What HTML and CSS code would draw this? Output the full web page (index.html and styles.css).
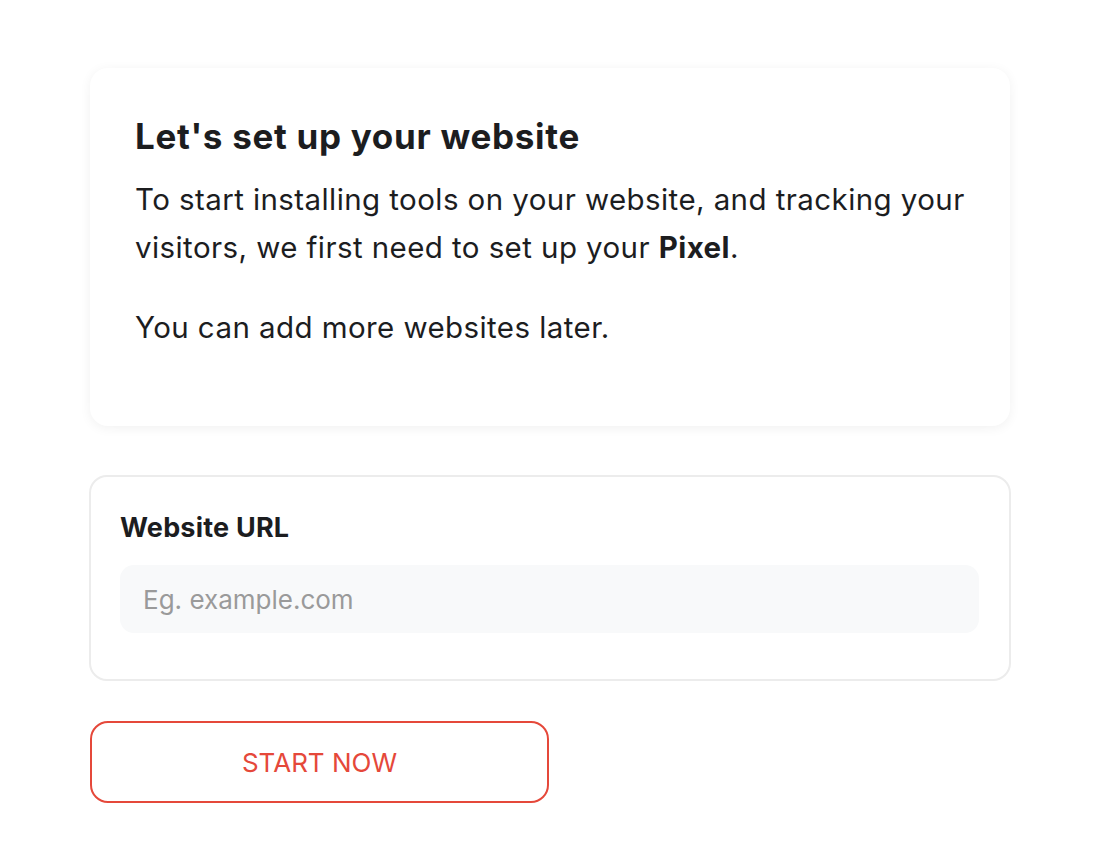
FILE: index.html
```html
<!DOCTYPE html>
<html lang="en">
<head>
    <meta charset="UTF-8" />
    <meta name="viewport" content="width=device-width, initial-scale=1" />
    <title>Set up your website</title>
    <link rel="stylesheet" href="styles.css">
</head>
<body>
    <div class="setup">
        <div class="intro-card">
            <h1>Let's set up your website</h1>
            <p>To start installing tools on your website, and tracking your visitors, we first need to set up your <strong>Pixel</strong>.</p>
            <p>You can add more websites later.</p>
        </div>
        <form class="url-card" onsubmit="return false;">
            <label for="websiteUrl">Website URL</label>
            <input id="websiteUrl" type="text" placeholder="Eg. example.com" />
        </form>
        <button class="start-btn" type="button">START NOW</button>
    </div>
</body>
</html>
```

FILE: styles.css
```css
body {
    margin: 0;
    background: #fff;
    font-family: Inter, "Noto Sans", sans-serif;
    color: #1c1d1f;
}
.setup {
    width: 922px;
    margin: 0 0 0 89px;
    padding-top: 68px;
}
.intro-card {
    margin: 0 1px;
    padding: 48px 45px 75px;
    border-radius: 18px;
    background: #fff;
    box-shadow: 0 2px 12px rgba(0, 0, 0, 0.06);
}
h1 {
    margin: 0 0 19px;
    font-size: 35px;
    font-weight: 700;
    line-height: 40px;
    letter-spacing: 0.7px;
}
.intro-card p {
    margin: 0 0 32px;
    font-size: 29.5px;
    line-height: 48px;
    letter-spacing: 0.42px;
}
.intro-card p:last-child {
    margin-bottom: 0;
}
.url-card {
    margin-top: 49px;
    padding: 35px 30px 46px 29px;
    border: 2px solid #ececec;
    border-radius: 18px;
}
.url-card label {
    display: block;
    margin-bottom: 21px;
    font-size: 27px;
    font-weight: 700;
    line-height: 32px;
    letter-spacing: 0.2px;
}
.url-card input {
    display: block;
    box-sizing: border-box;
    width: 100%;
    height: 68px;
    padding: 0 23px;
    border: none;
    border-radius: 14px;
    background: #f8f9fa;
    font-family: inherit;
    font-size: 26px;
    color: #1c1d1f;
    outline: none;
}
.url-card input::placeholder {
    color: #9a9a9a;
}
.start-btn {
    display: block;
    width: 459px;
    height: 82px;
    margin: 40px 0 0 1px;
    border: 2px solid #e5483a;
    border-radius: 18px;
    background: #fff;
    color: #e5483a;
    font-family: inherit;
    font-size: 26px;
    cursor: pointer;
}
```
